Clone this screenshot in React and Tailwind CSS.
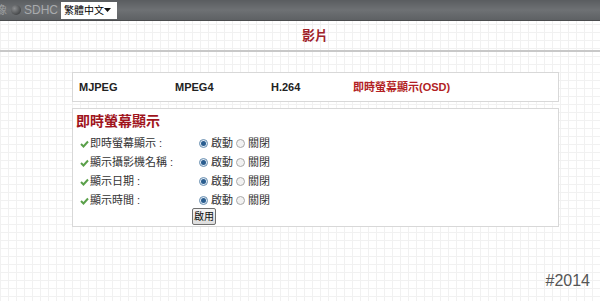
import React from 'react';

const rows = ['即時螢幕顯示 :', '顯示攝影機名稱 :', '顯示日期 :', '顯示時間 :'];

const Check = () => (
  <svg width="9" height="8" viewBox="0 0 9 8" className="shrink-0">
    <path d="M1 4 L3.5 6.5 L8 1.5" fill="none" stroke="#5aa04a" strokeWidth="2" />
  </svg>
);

const Radio = ({ on }) => (
  <span
    className={`w-[9px] h-[9px] rounded-full border shrink-0 flex items-center justify-center ${
      on ? 'border-[#6a8fb0] bg-[#dfeaf5]' : 'border-[#a8a8a8] bg-[#f2f2f2]'
    }`}
  >
    {on && <span className="w-[5px] h-[5px] rounded-full bg-[#2a5d8f]" />}
  </span>
);

export default function App() {
  return (
    <div
      className="w-[600px] h-[301px] overflow-hidden bg-white text-[#222] bg-[linear-gradient(#f1f1f1_1px,transparent_1px),linear-gradient(90deg,#f1f1f1_1px,transparent_1px)] bg-[size:8px_8px]"
      style={{ fontFamily: '"Liberation Sans", "Noto Sans CJK TC", sans-serif' }}
    >
      {/* top bar */}
      <div className="h-[21px] flex items-center bg-[linear-gradient(#5a5d60,#6e7174_50%,#5e6164)] border-b border-[#4a4c4e] whitespace-nowrap">
        <span className="text-[11px] text-[#9a9c9e] ml-[-4px]">像</span>
        <span className="w-[10px] h-[10px] rounded-full bg-[radial-gradient(circle_at_35%_35%,#8c8e90,#2c2e30)] ml-[4px]" />
        <span className="text-[12px] text-[#a9abad] ml-[3px]">SDHC</span>
        <div className="ml-[3px] h-[17px] w-[56px] bg-white flex items-center justify-between pl-[3px] pr-[6px] text-[10px] text-black">
          <span className="whitespace-nowrap">繁體中文</span>
          <svg width="7" height="4" viewBox="0 0 7 4" className="shrink-0">
            <path d="M0 0 H7 L3.5 4 Z" fill="#111" />
          </svg>
        </div>
      </div>

      {/* page title */}
      <div className="h-[31px] flex items-center justify-center border-b-2 border-[#c8c8c8]">
        <span className="text-[13px] font-bold text-[#a0222a] pl-[30px]">影片</span>
      </div>

      <div className="pl-[72px] pt-[20px] w-[559px]">
        {/* tabs */}
        <div className="h-[30px] bg-white border border-[#d8d8d8] flex items-center text-[11px] font-bold pl-[6px]">
          <span className="w-[96px]">MJPEG</span>
          <span className="w-[96px]">MPEG4</span>
          <span className="w-[82px]">H.264</span>
          <span className="text-[#b21e24]">即時螢幕顯示(OSD)</span>
        </div>

        {/* OSD panel */}
        <div className="mt-[6px] h-[119px] bg-white border border-[#d8d8d8] pl-[3px] pt-[2px]">
          <div
            className="text-[14px] font-bold text-[#a0141c] leading-[18px]"
            style={{ fontFamily: '"Noto Sans CJK TC", serif' }}
          >
            即時螢幕顯示
          </div>
          <div className="mt-[6px] flex flex-col gap-[2px] text-[11px] text-[#333]">
            {rows.map((label, i) => (
              <div key={i} className="h-[17px] flex items-center">
                <span className="w-[14px] pl-[4px] flex">
                  <Check />
                </span>
                <span className="w-[109px]">{label}</span>
                <Radio on />
                <span className="ml-[3px] w-[25px]">啟動</span>
                <Radio />
                <span className="ml-[3px]">關閉</span>
              </div>
            ))}
          </div>
          <div className="flex pl-[116px] mt-[-1px]">
            <button className="h-[17px] w-[24px] flex items-center justify-center text-[10px] leading-none border border-[#707070] rounded-[2px] bg-[linear-gradient(#f6f6f6,#dcdcdc)] text-[#111]">
              啟用
            </button>
          </div>
        </div>
      </div>

      <div className="flex justify-end pr-[10px] mt-[42px]">
        <span className="text-[16px] text-[#555]">#2014</span>
      </div>
    </div>
  );
}
